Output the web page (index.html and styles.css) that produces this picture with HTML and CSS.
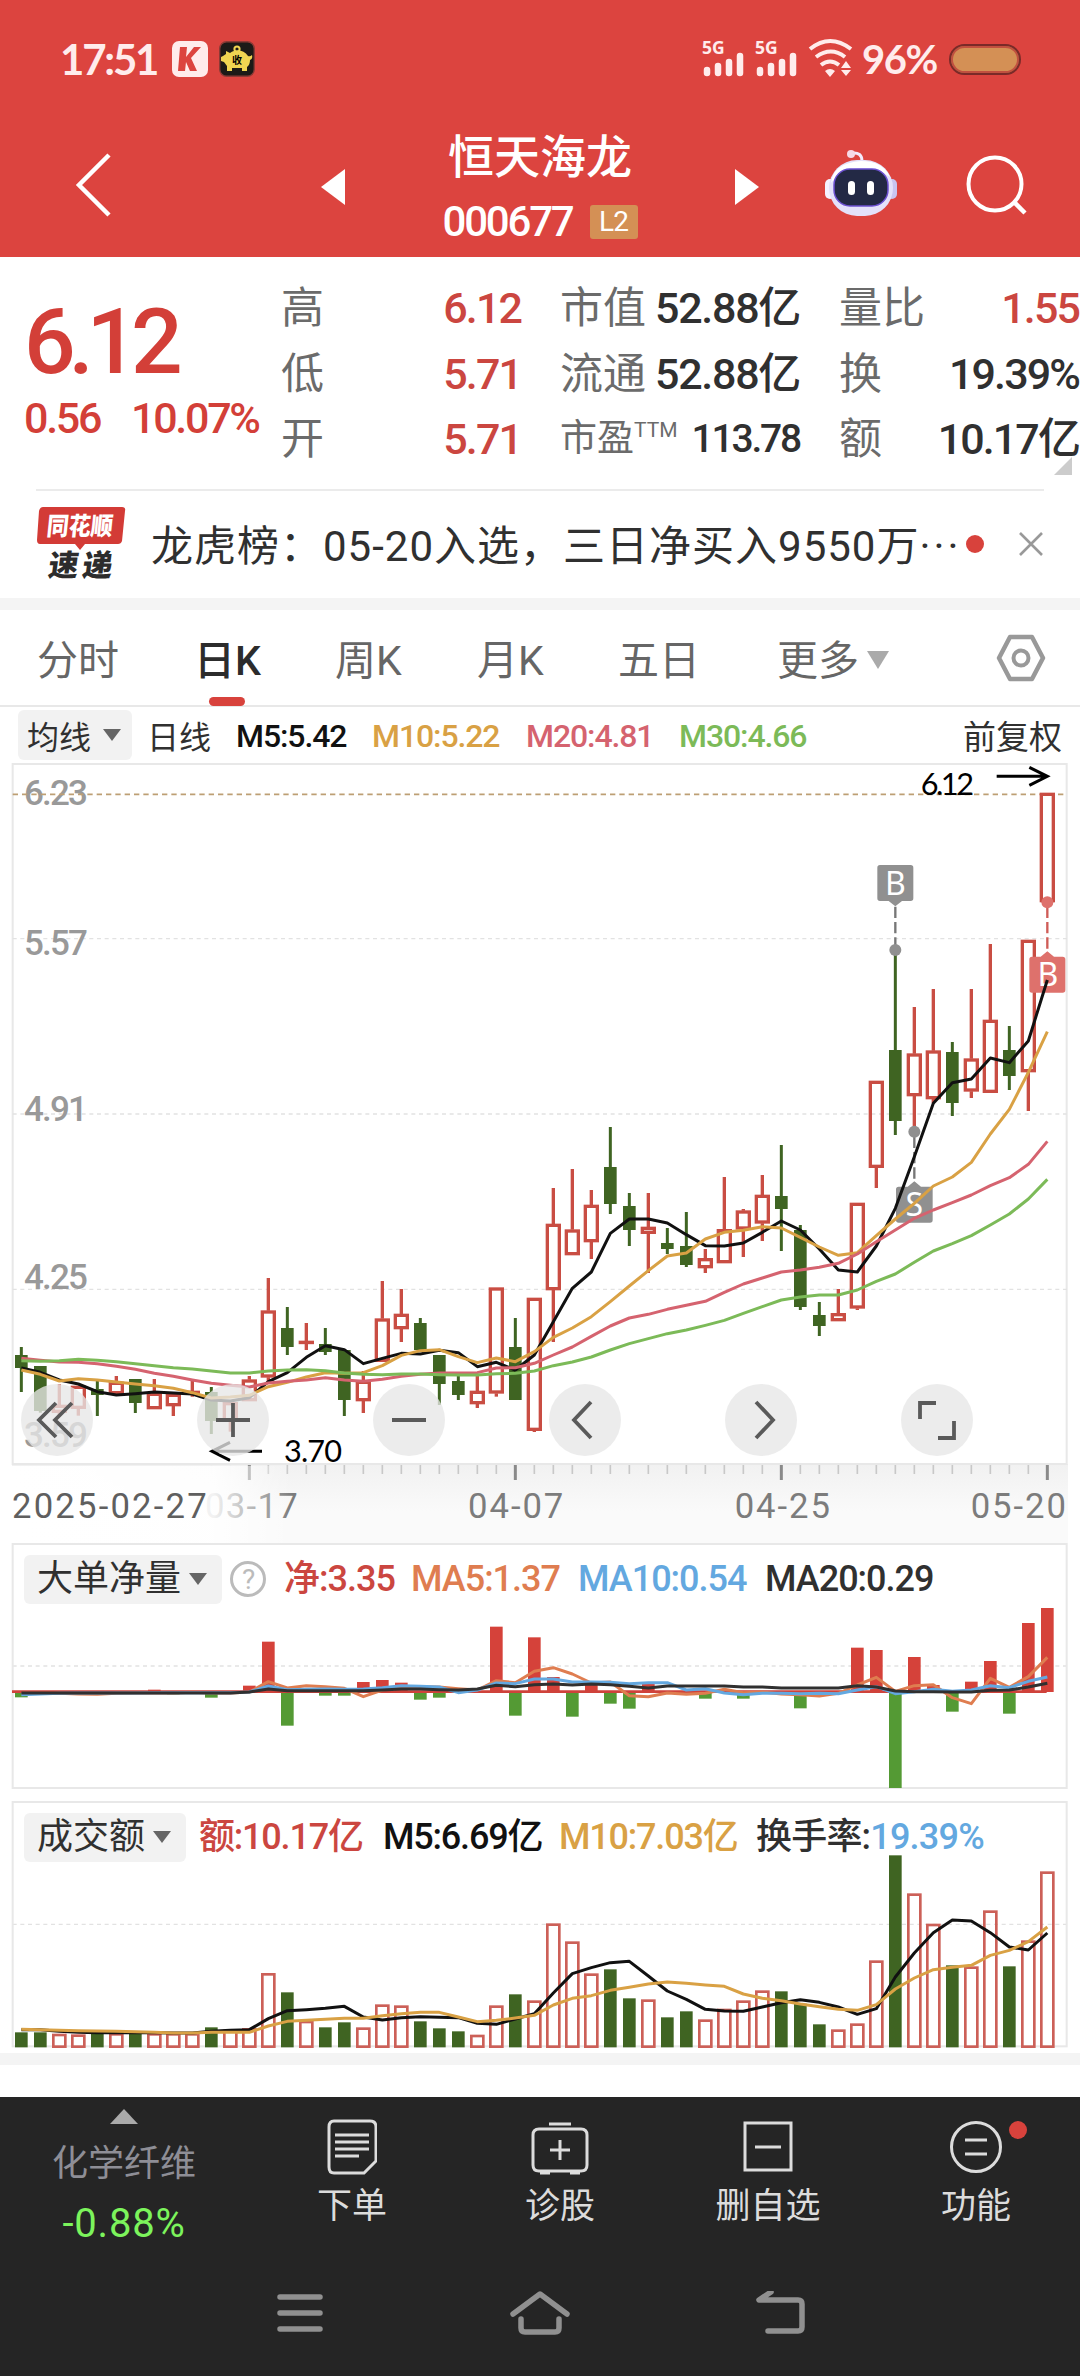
FILE: index.html
```html
<!DOCTYPE html>
<html lang="zh-CN">
<head>
    <meta charset="UTF-8">
    <meta name="viewport" content="width=device-width, initial-scale=1.0">
    <title>恒天海龙 000677</title>
    <link rel="stylesheet" href="styles.css">
</head>
<body>
    <header class="header">
        <div class="status-bar">
            <span class="time">17:51</span>
            <svg class="app-k" width="36" height="36" viewBox="0 0 36 36">
                <rect width="36" height="36" rx="7" fill="#ffecec"/>
                <path d="M8 6h7l-1 10 8-10h7L19 17l6 13h-7l-4-9-1 9H6z" fill="#dc443f"/>
            </svg>
            <svg class="app-pig" width="36" height="36" viewBox="0 0 36 36">
                <rect x=".7" y=".7" width="34.6" height="34.6" rx="7" fill="#1c1a17" stroke="#8a3a35" stroke-width="1.4"/>
                <path d="M8 30v-5l-3-4-3-1v-4l2-1 3-2v-3l4 2c6-4 14-3 18 3q2 1 4-1 1 4-2 5 0 5-3 7v4h-5v-3H13v3z" fill="#f0d552"/>
                <circle cx="18" cy="8" r="2.6" fill="none" stroke="#f0d552" stroke-width="2"/>
                <text x="13" y="23" font-size="10">收</text>
            </svg>
            <div class="status-right">
                <svg width="42" height="40" viewBox="0 0 42 40">
                    <text class="net" x="0" y="15">5G</text>
                    <path d="M5 31v3M16 27v7M27 23v11M38 17v17" class="signal"/>
                </svg>
                <svg width="42" height="40" viewBox="0 0 42 40">
                    <text class="net" x="0" y="15">5G</text>
                    <path d="M5 31v3M16 27v7M27 23v11M38 17v17" class="signal"/>
                </svg>
                <svg width="46" height="40" viewBox="0 0 46 40">
                    <path d="M2 10q20-16 41 0M8 18q15-11 29 0M13 26q9-7 18 0" fill="none" stroke="#ffecec" stroke-width="4"/>
                    <path d="M17 32q5-4 10 0l-5 6zM33 29l5-7 5 7zM33 31l5 6 5-6z" fill="#ffecec"/>
                </svg>
                <span class="percent">96%</span>
                <span class="battery"></span>
            </div>
        </div>
        <div class="nav-bar">
            <svg class="back" width="40" height="66" viewBox="0 0 40 66"><path d="M35 3L5 33l30 30" fill="none" stroke="#fff" stroke-width="4.5"/></svg>
            <svg class="prev" width="24" height="36" viewBox="0 0 24 36"><path d="M24 0v36L0 18z" fill="#fff"/></svg>
            <div class="stock">
                <h1>恒天海龙</h1>
                <div class="code"><span>000677</span><b>L2</b></div>
            </div>
            <svg class="next" width="24" height="36" viewBox="0 0 24 36"><path d="M0 0v36l24-18z" fill="#fff"/></svg>
            <svg class="robot" width="72" height="68" viewBox="0 0 72 68">
                <path d="M27 4q10-1 10 8" fill="none" stroke="#f3eafc" stroke-width="3"/>
                <circle cx="26" cy="5" r="4" fill="#f6d9e6"/>
                <rect x="0" y="30" width="10" height="20" rx="5" fill="#f5f2ff"/>
                <rect x="62" y="30" width="10" height="20" rx="5" fill="#c9c4f0"/>
                <rect x="4" y="11" width="64" height="56" rx="28" fill="#e4e1fa"/>
                <path d="M6 34Q8 14 36 12q22 0 29 16-12-10-30-9T6 34z" fill="#fff"/>
                <rect x="9" y="20" width="54" height="37" rx="16" fill="#232945" stroke="#6b4fd0" stroke-width="1.5"/>
                <rect x="23" y="32" width="7" height="14" rx="3.5" fill="#fff"/>
                <rect x="42" y="32" width="7" height="14" rx="3.5" fill="#fff"/>
            </svg>
            <svg class="search" width="62" height="60" viewBox="0 0 62 60"><circle cx="29" cy="29" r="26.5" fill="none" stroke="#fff" stroke-width="4"/><path d="M48 47l11 11" stroke="#fff" stroke-width="4.5"/></svg>
        </div>
    </header>

    <section class="quote">
        <div class="price">
            <div class="now">6.12</div>
            <div class="change"><span>0.56</span><span>10.07%</span></div>
        </div>
        <dl class="col">
            <div><dt>高</dt><dd class="red">6.12</dd></div>
            <div><dt>低</dt><dd class="red">5.71</dd></div>
            <div><dt>开</dt><dd class="red">5.71</dd></div>
        </dl>
        <dl class="col">
            <div><dt>市值</dt><dd>52.88亿</dd></div>
            <div><dt>流通</dt><dd>52.88亿</dd></div>
            <div class="small"><dt>市盈<sup>TTM</sup></dt><dd>113.78</dd></div>
        </dl>
        <dl class="col">
            <div><dt>量比</dt><dd class="red">1.55</dd></div>
            <div><dt>换</dt><dd>19.39%</dd></div>
            <div><dt>额</dt><dd>10.17亿</dd></div>
        </dl>
        <span class="corner"></span>
    </section>

    <section class="news">
        <svg width="90" height="74" viewBox="0 0 90 74">
            <path d="M6 0h79q4 0 3 4l-3 30q-1 3-4 3H48l-5 6-5-6H3q-3 0-3-4L2 4q1-4 4-4z" fill="#d33b36"/>
            <text class="logo-top" x="12" y="28" textLength="66" lengthAdjust="spacingAndGlyphs" transform="skewX(-6)">同花顺</text>
            <text class="logo-bottom" x="20" y="69" textLength="64" transform="skewX(-8)">速递</text>
        </svg>
        <p>龙虎榜：05-20入选，三日净买入9550万<i>···</i></p>
        <span class="dot"></span>
        <svg class="close" width="26" height="26" viewBox="0 0 26 26"><path d="M2 2l22 22M24 2L2 24" stroke="#999" stroke-width="2.6"/></svg>
    </section>

    <nav class="tabs">
        <a>分时</a>
        <a class="active">日K</a>
        <a>周K</a>
        <a>月K</a>
        <a>五日</a>
        <a>更多<i></i></a>
        <svg width="50" height="48" viewBox="0 0 50 48"><path d="M14 3h22l11 21-11 21H14L3 24z" fill="none" stroke="#999" stroke-width="4.5" stroke-linejoin="round"/><circle cx="25" cy="24" r="7.5" fill="none" stroke="#999" stroke-width="4"/></svg>
    </nav>

    <div class="toolbar">
        <span class="pill">均线<i></i></span>
        <span class="cycle">日线</span>
        <span class="m5">M5:5.42</span>
        <span class="gold">M10:5.22</span>
        <span class="pink">M20:4.81</span>
        <span class="green">M30:4.66</span>
        <span class="adjust">前复权</span>
    </div>

    <section class="kline">
        <!-- charts are drawn in 3x units -->
        <svg width="1080" height="780" viewBox="0 39 3240 2340">
            <defs>
                <linearGradient id="axisY" x1="0" y1="0" x2="0" y2="1"><stop offset="0" stop-color="#f1f1f1"/><stop offset=".6" stop-color="#fafafa"/></linearGradient>
                <linearGradient id="axisX"><stop offset="0" stop-color="#fff"/><stop offset=".72" stop-color="#fff" stop-opacity=".9"/><stop offset="1" stop-color="#fff" stop-opacity="0"/></linearGradient>
            </defs>
            <rect x="36" y="2142" width="3168" height="237" fill="url(#axisY)"/>
            <rect x="38" y="42" width="3162" height="2100" fill="#fff" stroke="#e8e8e8" stroke-width="6"/>
            <path d="M38 566H3200M38 1092H3200M38 1618H3200" class="grid"/>
            <g class="level">
                <text x="72" y="166" textLength="192">6.23</text>
                <text x="72" y="615" textLength="192">5.57</text>
                <text x="72" y="1114" textLength="192">4.91</text>
                <text x="72" y="1617" textLength="192">4.25</text>
                <text x="72" y="2090" textLength="192">3.59</text>
            </g>
            <path d="M38 133H3200" class="last-line"/>
            <g id="ticks"></g>
            <g class="date">
                <text x="615" y="2303" textLength="278">03-17</text>
                <text x="1404" y="2303" textLength="286">04-07</text>
                <text x="2204" y="2303" textLength="286">04-25</text>
                <text x="2912" y="2303" textLength="286">05-20</text>
                <rect x="36" y="2148" width="840" height="231" fill="url(#axisX)"/>
                <text x="36" y="2303" textLength="584" class="first">2025-02-27</text>
            </g>
            <g id="candles"></g>
            <g class="mark">
                <path d="M2686 470V590" class="stem"/><circle cx="2686" cy="600" r="18"/>
                <path d="M2640 345h92q8 0 8 8v92q0 8-8 8h-26l-20 16-20-16h-26q-8 0-8-8v-92q0-8 8-8z"/><text x="2686" y="434">B</text>
                <path d="M2743 1160V1300" class="stem"/><circle cx="2743" cy="1145" r="18"/>
                <path d="M2696 1310h27l20-16 20 16h27q8 0 8 8v92q0 8-8 8h-94q-8 0-8-8v-92q0-8 8-8z"/><text x="2743" y="1399">S</text>
            </g>
            <g class="mark buy">
                <path d="M3142 470V610" class="stem"/><circle cx="3142" cy="457" r="18"/>
                <path d="M3096 620h26l20-16 20 16h26q8 0 8 8v92q0 8-8 8h-92q-8 0-8-8v-92q0-8 8-8z"/><text x="3144" y="709">B</text>
            </g>
            <g id="maLines"></g>
            <g class="peak">
                <text x="2762" y="135" textLength="160">6.12</text>
                <path d="M2990 79H3140M3088 52l54 27-54 27"/>
                <text x="852" y="2135" textLength="174">3.70</text>
                <path d="M786 2104H640M690 2077l-54 27 54 27"/>
            </g>
        </svg>
        <div class="controls">
            <button><svg viewBox="0 0 72 72"><path d="M35 19L18 36l17 17M51 19L34 36l17 17"/></svg></button>
            <button><svg viewBox="0 0 72 72"><path d="M19 36h34M36 19v34"/></svg></button>
            <button><svg viewBox="0 0 72 72"><path d="M19 36h34"/></svg></button>
            <button><svg viewBox="0 0 72 72"><path d="M42 18L25 36l17 18"/></svg></button>
            <button><svg viewBox="0 0 72 72"><path d="M31 18l17 18-17 18"/></svg></button>
            <button><svg viewBox="0 0 72 72"><path d="M19 35V19h16M37 54h16V37"/></svg></button>
        </div>
    </section>

    <section class="panel">
        <svg width="1080" height="248" viewBox="0 39 3240 744">
            <path d="M38 408H3200" class="grid"/>
            <rect x="38" y="42" width="3162" height="732" class="frame"/>
            <g id="netBars"></g>
            <path d="M36 485H3140" stroke="#cf423b" stroke-width="8"/>
            <g id="netLines"></g>
        </svg>
        <div class="panel-head">
            <span class="pill">大单净量<i></i></span>
            <span class="help">?</span>
            <span class="red">净:3.35</span>
            <span class="orange">MA5:1.37</span>
            <span class="blue">MA10:0.54</span>
            <span class="dark">MA20:0.29</span>
        </div>
    </section>

    <section class="panel amount">
        <svg width="1080" height="248" viewBox="0 812 3240 744">
            <path d="M38 1182H3200" class="grid"/>
            <rect x="38" y="815" width="3162" height="733" class="frame"/>
            <g id="volBars"></g>
            <g id="volLines"></g>
        </svg>
        <div class="panel-head">
            <span class="pill">成交额<i></i></span>
            <span class="red">额:10.17亿</span>
            <span class="m5">M5:6.69亿</span>
            <span class="gold">M10:7.03亿</span>
            <span class="dark">换手率:<em>19.39%</em></span>
        </div>
    </section>

    <div class="gap"></div>

    <footer class="footer">
        <div class="actions">
            <div class="sector">
                <i></i>
                <span>化学纤维</span>
                <b>-0.88%</b>
            </div>
            <div class="action">
                <svg width="50" height="56" viewBox="0 0 50 56"><path d="M7 2h36q6 0 6 6v34L37 54H7q-5 0-5-6V8q0-6 5-6zM8 16h34M8 23h34M8 30h34M8 37h24"/></svg>
                <span>下单</span>
            </div>
            <div class="action">
                <svg width="58" height="56" viewBox="0 0 58 56"><path d="M18 5h22M8 10h42q6 0 6 6v30q0 6-6 6H8q-6 0-6-6V16q0-6 6-6zM29 21v20M19 31h20M9 54h10M39 54h10"/></svg>
                <span>诊股</span>
            </div>
            <div class="action">
                <svg width="50" height="56" viewBox="0 0 50 56"><path d="M2 4h46v47H2zM12 28h26"/></svg>
                <span>删自选</span>
            </div>
            <div class="action">
                <svg width="52" height="56" viewBox="0 0 52 56"><circle cx="26" cy="28" r="24.5"/><path d="M15 21h22M15 35h22"/></svg>
                <span>功能</span>
                <i class="badge"></i>
            </div>
        </div>
        <div class="system">
            <svg width="48" height="46" viewBox="0 0 48 46"><path d="M4 6h40M4 22h40M4 38h40"/></svg>
            <svg width="60" height="46" viewBox="0 0 60 46"><path d="M3 23L30 3l27 20M11 28v9q0 4 4 4h30q4 0 4-4v-9"/></svg>
            <svg width="50" height="46" viewBox="0 0 50 46"><path d="M15 1L3 9h39q4 0 4 4v23q0 4-4 4H12"/></svg>
        </div>
    </footer>

    <script src="chart.js"></script>
</body>
</html>
```
FILE: styles.css
```css
* {
    box-sizing: border-box;
}
body {
    margin: 0;
    width: 1080px;
    height: 2376px;
    overflow: hidden;
    background: #fff;
    color: #303030;
    font-family: Roboto, "Noto Sans CJK SC", sans-serif;
}
svg { display: block; flex: none; }
h1, p, dl, dd { margin: 0; }
i, em { font-style: normal; }

/* header */
.header {
    height: 257px;
    background: #dc443f;
    color: #fff;
}
.status-bar {
    display: flex;
    align-items: center;
    height: 118px;
    padding: 0 60px;
    color: #ffecec;
    font-family: Lato, sans-serif;
    font-weight: 700;
}
.time {
    width: 112px;
    font-size: 42px;
    letter-spacing: -2.2px;
}
.app-pig { margin-left: 11px; }
.app-pig text { font-family: "Noto Sans CJK SC", sans-serif; font-weight: 700; }
.status-right {
    display: flex;
    align-items: center;
    margin-left: auto;
    gap: 11px;
}
.status-right > svg { overflow: visible; }
.net {
    font-family: "Noto Sans", sans-serif;
    font-size: 17.5px;
    font-weight: 700;
    fill: #ffecec;
}
.signal {
    stroke: #ffecec;
    stroke-width: 6.5;
    stroke-linecap: round;
}
.percent {
    width: 76px;
    margin-left: -3px;
    font-size: 40px;
    letter-spacing: -1.4px;
}
.battery {
    width: 72px;
    height: 31px;
    margin: 0 -1px 0 0;
    border: 2px solid #7a2a28;
    border-radius: 16px;
    background: #d49055;
    box-shadow: inset 0 0 0 2px #c2503f;
}
.nav-bar {
    display: flex;
    align-items: center;
    height: 134px;
    padding-left: 74px;
}
.prev { margin-left: 207px; margin-top: 4px; }
.stock {
    display: flex;
    flex-direction: column;
    align-items: center;
    width: 390px;
}
.stock h1 {
    height: 66px;
    font-size: 46px;
    font-weight: 500;
    line-height: 61px;
}
.code {
    display: flex;
    align-items: center;
    gap: 17px;
    height: 50px;
    padding-top: 7px;
    font-size: 42px;
    font-weight: 500;
    letter-spacing: -2.2px;
}
.code b {
    width: 48px;
    height: 34px;
    border-radius: 3px;
    background: #d49055;
    font-size: 28px;
    font-weight: 400;
    line-height: 34px;
    text-align: center;
    letter-spacing: -1px;
}
.next { margin-top: 4px; }
.robot { margin: -4px 0 0 66px; }
.search { margin-left: 69px; }

/* quote */
.quote {
    display: grid;
    grid-template-columns: 214px 240px 240px 240px;
    column-gap: 39px;
    position: relative;
    height: 233px;
    padding: 18px 0 0 28px;
}
.quote::after {
    content: "";
    position: absolute;
    left: 36px;
    right: 36px;
    bottom: -1px;
    height: 2px;
    background: #ebebeb;
}
.price { color: #d33f38; font-weight: 500; }
.now {
    margin: 18px 0 0 -4px;
    font-size: 91px;
    line-height: 98px;
    letter-spacing: -7.2px;
}
.change {
    display: flex;
    gap: 31px;
    margin: 3px 0 0 -4px;
    font-size: 43px;
    line-height: 48px;
    letter-spacing: -2.3px;
    white-space: nowrap;
}
.col > div {
    display: flex;
    justify-content: space-between;
    height: 65.5px;
    line-height: 66px;
}
.col dt {
    font-size: 43px;
    color: #6b6b6b;
    white-space: nowrap;
}
.col dd {
    font-size: 43px;
    font-weight: 500;
    letter-spacing: -1.9px;
    white-space: nowrap;
}
.col:nth-child(3) dd { letter-spacing: -1.3px; }
.col .small dt { font-size: 37px; }
.col:nth-child(3) .small dd { font-size: 39px; letter-spacing: -2.2px; }
.col sup {
    font-size: 21px;
    line-height: 0;
    vertical-align: 14px;
    letter-spacing: 0;
}
.red, .col dd.red { color: #cb4640; }
.corner {
    position: absolute;
    right: 8px;
    bottom: 15px;
    border-left: 18px solid transparent;
    border-bottom: 18px solid #ccc;
}

/* news */
.news {
    display: flex;
    align-items: center;
    height: 120px;
    padding: 0 36px 0 37px;
    border-bottom: 12px solid #f4f4f4;
}
.logo-top { fill: #fff; font-size: 25px; font-weight: 900; }
.logo-bottom { fill: #2c2c2c; font-size: 30px; font-weight: 900; }
.news p {
    width: 812px;
    margin: -4px 0 0 24px;
    font-size: 42px;
    letter-spacing: 1px;
    white-space: nowrap;
}
.news p i { letter-spacing: 3px; }
.dot {
    width: 18px;
    height: 18px;
    margin-left: 3px;
    border-radius: 50%;
    background: #d8423c;
}
.close { margin-left: auto; }

/* period tabs */
.tabs {
    position: relative;
    display: flex;
    align-items: center;
    height: 97px;
    padding-left: 37px;
    border-bottom: 2px solid #e8e8e8;
    font-size: 41px;
    color: #666;
}
.tabs a { position: relative; top: -1px; width: 141px; }
.tabs a:nth-child(1) { width: 157px; }
.tabs a:nth-child(3) { width: 142px; }
.tabs a:nth-child(5) { width: 159px; }
.tabs a:nth-child(6) { width: 219px; }
.tabs .active { color: #2c2c2c; font-weight: 500; }
.tabs .active::after {
    content: "";
    position: absolute;
    left: 15px;
    bottom: -19px;
    width: 36px;
    height: 9px;
    border-radius: 5px;
    background: #d8423c;
}
.tabs i {
    display: inline-block;
    margin-left: 8px;
    vertical-align: 6px;
    border: 11px solid transparent;
    border-top: 18px solid #aaa;
    border-bottom: 0;
}

/* indicator toolbar */
.toolbar {
    display: flex;
    align-items: center;
    height: 56px;
    padding: 3px 18px 3px;
    font-size: 32px;
    letter-spacing: 0;
}
.toolbar span { flex: none; white-space: nowrap; }
.pill {
    display: flex;
    flex: none;
    align-items: center;
    justify-content: space-between;
    border-radius: 6px;
    background: #f2f2f2;
}
.pill i {
    border: 9px solid transparent;
    border-top: 12px solid #666;
    border-bottom: 0;
}
.toolbar .pill {
    width: 114px;
    height: 50px;
    padding: 0 11px 0 9px;
}
.cycle { width: 89px; margin-left: 15px; }
.toolbar .m5 { width: 136px; }
.toolbar .gold { width: 154px; }
.toolbar .pink { width: 153px; }
.toolbar .m5, .toolbar .gold, .toolbar .pink, .toolbar .green { padding-top: 2px; font-weight: 500; letter-spacing: -1.1px; }
.toolbar .adjust { margin-left: auto; font-size: 33px; }
.m5 { color: #111; }
.gold { color: #d9a144; }
.pink { color: #d5636f; }
.green { color: #7cba58; }
.orange { color: #df7d50; }
.blue, em { color: #63a8e0; }

/* k-line */
.kline { position: relative; height: 780px; }
.grid { fill: none; stroke: #e2e2e2; stroke-width: 4; stroke-dasharray: 12 11; }
.last-line { stroke: #bd9f74; stroke-width: 5; stroke-dasharray: 16 12; }
.level text { font-size: 105px; font-weight: 500; fill: #999; }
.date text { font-size: 104px; font-weight: 400; fill: #7c7c7c; }
.date .first { fill: #5f5f5f; }
.up { fill: none; stroke: #c94d43; stroke-width: 10; }
.down { fill: #3f6422; stroke: none; }
.wick-down { stroke: #3f6422; stroke-width: 9; }
.line { fill: none; stroke-width: 9; stroke-linejoin: round; }
.mark { fill: #909090; }
.mark text { fill: #fff; font-family: "Noto Sans", sans-serif; font-size: 96px; text-anchor: middle; }
.mark .stem { stroke: #777; stroke-width: 7; stroke-dasharray: 34 12; }
.buy { fill: #de716c; }
.buy .stem { stroke: #cf5c57; }
.peak text { font-family: Lato, sans-serif; font-size: 92px; fill: #000; }
.peak path { fill: none; stroke: #000; stroke-width: 9; }
.controls {
    position: absolute;
    left: 21px;
    top: 621px;
    display: flex;
    gap: 104px;
}
.controls button {
    width: 72px;
    height: 72px;
    padding: 0;
    border: 0;
    border-radius: 50%;
    background: rgba(231, 231, 231, 0.78);
}
.controls path { fill: none; stroke: #5a5a5a; stroke-width: 3.8; }

/* sub charts */
.panel { position: relative; height: 258px; }
.panel > svg { position: absolute; left: 0; top: 0; }
.frame { fill: none; stroke: #e8e8e8; stroke-width: 6; }
.panel-head {
    position: relative;
    display: flex;
    align-items: center;
    height: 60px;
    padding: 12px 24px 0;
    font-size: 36px;
    font-weight: 500;
    line-height: 48px;
    letter-spacing: -1px;
    white-space: nowrap;
}
.panel-head .pill {
    width: 198px;
    height: 49px;
    padding: 0 15px 0 13px;
    font-weight: 400;
    letter-spacing: 0;
}
.panel-head .help {
    width: 36px;
    height: 36px;
    margin: 0 18px 0 8px;
    border: 3px solid #bbb;
    border-radius: 50%;
    color: #bbb;
    font-size: 28px;
    font-weight: 400;
    line-height: 31px;
    text-align: center;
}
.panel-head .red { width: 127px; }
.panel-head .orange { width: 167px; }
.panel-head .blue { width: 187px; }
.dark { color: #303030; }
.amount { height: 252px; }
.amount .panel-head { letter-spacing: -1.2px; }
.amount .pill { width: 162px; }
.amount .red { width: 184px; margin-left: 13px; }
.amount .m5 { width: 176px; }
.amount .gold { width: 197px; }
.amount .dark { letter-spacing: -0.8px; }
.vol-up { fill: none; stroke: #cc6058; stroke-width: 8; }

.gap {
    height: 44px;
    border-top: 12px solid #f4f4f4;
}

/* footer */
.footer {
    height: 279px;
    background: #252525;
    color: #dcdcdc;
}
.actions {
    display: grid;
    grid-template-columns: 248px repeat(4, 208px);
    height: 170px;
    font-size: 35px;
}
.sector {
    display: flex;
    flex-direction: column;
    align-items: center;
    padding-top: 12px;
    line-height: 60px;
    color: #8e8e96;
}
.sector i {
    margin-bottom: 10px;
    border: 14px solid transparent;
    border-bottom: 15px solid #aaa;
    border-top: 0;
}
.sector span { font-size: 36px; }
.sector b { color: #7cf45c; font-size: 40px; font-weight: 400; letter-spacing: 0.8px; }
.action {
    position: relative;
    display: flex;
    flex-direction: column;
    align-items: center;
    padding-top: 22px;
    line-height: 63px;
}
.action path, .action circle { fill: none; stroke: #dcdcdc; stroke-width: 3; }
.badge {
    position: absolute;
    left: 137px;
    top: 24px;
    width: 18px;
    height: 18px;
    border-radius: 50%;
    background: #d8423c;
}
.system {
    display: flex;
    padding: 24px 0 0 276px;
    gap: 186px;
}
.system path { fill: none; stroke: #909090; stroke-width: 5.5; stroke-linecap: round; stroke-linejoin: round; }
```
FILE: chart.js
```javascript
const NS = 'http://www.w3.org/2000/svg';
const STEP = 57;
const FIRST = 64;

function add(parent, tag, attrs) {
    const el = document.createElementNS(NS, tag);
    for (const key in attrs) el.setAttribute(key, attrs[key]);
    document.getElementById(parent).appendChild(el);
}

function xAt(i) {
    return FIRST + i * STEP;
}

function drawLine(parent, values, color) {
    const points = values.map((v, i) => `${xAt(i)},${v}`).join(' ');
    add(parent, 'polyline', { points, class: 'line', stroke: color });
}

// [direction, high, body top, body bottom, low]
const candles = [
    ['G', 1791, 1815, 1854, 1926], ['G', 1848, 1848, 1983, 1988], ['R', 1902, 1965, 1988, 1995],
    ['R', 1908, 1908, 1976, 1997], ['G', 1893, 1917, 1935, 1998], ['R', 1878, 1896, 1932, 1935],
    ['G', 1887, 1887, 1959, 1989], ['R', 1887, 1929, 1977, 1977], ['R', 1932, 1932, 1968, 1998],
    ['R', 1890, 1923, 1932, 1940], ['G', 1911, 1926, 2013, 2052], ['R', 1957, 1957, 2015, 2045],
    ['R', 1878, 1889, 1953, 1953], ['R', 1584, 1682, 1882, 1900], ['G', 1671, 1734, 1791, 1815],
    ['R', 1719, 1773, 1780, 1800], ['G', 1734, 1782, 1806, 1815], ['G', 1800, 1800, 1950, 1998],
    ['R', 1863, 1893, 1953, 1989], ['R', 1593, 1706, 1835, 1835], ['R', 1617, 1692, 1737, 1776],
    ['G', 1704, 1719, 1800, 1800], ['G', 1815, 1815, 1902, 1965], ['G', 1878, 1893, 1935, 1950],
    ['R', 1875, 1923, 1962, 1974], ['R', 1613, 1613, 1930, 1940], ['G', 1704, 1791, 1950, 1950],
    ['R', 1644, 1644, 2042, 2046], ['R', 1314, 1422, 1620, 1776], ['R', 1257, 1439, 1515, 1515],
    ['R', 1320, 1365, 1476, 1527], ['G', 1131, 1251, 1362, 1392], ['G', 1329, 1368, 1440, 1488],
    ['R', 1329, 1431, 1451, 1569], ['G', 1434, 1479, 1497, 1512], ['G', 1386, 1488, 1545, 1551],
    ['R', 1497, 1525, 1554, 1569], ['R', 1281, 1438, 1539, 1539], ['R', 1377, 1382, 1438, 1521],
    ['R', 1275, 1335, 1420, 1473], ['G', 1185, 1338, 1377, 1503], ['G', 1425, 1440, 1671, 1680],
    ['G', 1656, 1695, 1728, 1758], ['R', 1617, 1690, 1713, 1713], ['R', 1359, 1359, 1675, 1680],
    ['R', 993, 993, 1253, 1314], ['G', 597, 900, 1113, 1155], ['R', 771, 911, 1038, 1145],
    ['R', 717, 902, 1047, 1060], ['G', 876, 906, 1059, 1098], ['R', 717, 926, 1024, 1044],
    ['R', 582, 810, 1028, 1028], ['G', 828, 900, 978, 1020], ['R', 570, 570, 966, 1083],
    ['R', 129, 129, 456, 456]
];

candles.forEach(([dir, high, top, bottom, low], i) => {
    const x = xAt(i);
    if (dir === 'G') {
        add('candles', 'path', { d: `M${x} ${high}V${low}`, class: 'wick-down' });
        add('candles', 'rect', { x: x - 19, y: top, width: 38, height: bottom - top, class: 'down' });
    } else {
        add('candles', 'path', { d: `M${x} ${high}V${top}M${x} ${bottom}V${low}`, class: 'up' });
        add('candles', 'rect', { x: x - 18, y: top + 4, width: 36, height: Math.max(bottom - top - 8, 0.5), class: 'up' });
    }
});

for (let i = 10; i < 55; i++) {
    const major = i % 14 === 12;
    add('ticks', 'path', {
        d: `M${xAt(i)} 2145V${major ? 2190 : 2172}`,
        stroke: major ? '#8a8a8a' : i < 12 ? '#eee' : '#c8c8c8',
        'stroke-width': major ? 9 : 5
    });
}

drawLine('maLines', [1854, 1867, 1890, 1902, 1925, 1935, 1931, 1926, 1929, 1932, 1950, 1953, 1943, 1895, 1868, 1822, 1787, 1799, 1841, 1825, 1810, 1812, 1801, 1808, 1850, 1837, 1860, 1815, 1715, 1615, 1566, 1450, 1407, 1407, 1419, 1454, 1487, 1488, 1479, 1447, 1413, 1440, 1497, 1560, 1566, 1488, 1375, 1220, 1060, 998, 987, 924, 938, 873, 690], '#111');
drawLine('maLines', [1860, 1873, 1893, 1886, 1890, 1896, 1902, 1907, 1915, 1928, 1944, 1941, 1936, 1910, 1897, 1881, 1868, 1870, 1868, 1847, 1816, 1802, 1799, 1820, 1838, 1824, 1835, 1805, 1762, 1734, 1700, 1655, 1608, 1562, 1518, 1509, 1467, 1447, 1441, 1430, 1434, 1462, 1491, 1516, 1508, 1457, 1407, 1360, 1308, 1281, 1237, 1152, 1078, 967, 845], '#d9a144');
drawLine('maLines', [1825, 1831, 1836, 1837, 1841, 1849, 1858, 1870, 1879, 1890, 1900, 1906, 1911, 1899, 1894, 1890, 1883, 1890, 1894, 1888, 1879, 1873, 1869, 1869, 1868, 1854, 1853, 1840, 1815, 1791, 1759, 1728, 1704, 1693, 1678, 1666, 1654, 1627, 1602, 1584, 1566, 1560, 1552, 1540, 1512, 1475, 1440, 1405, 1380, 1358, 1335, 1307, 1283, 1243, 1174], '#d5636f');
drawLine('maLines', [1832, 1834, 1832, 1828, 1831, 1835, 1841, 1847, 1853, 1857, 1863, 1869, 1869, 1863, 1860, 1859, 1862, 1869, 1873, 1874, 1872, 1872, 1874, 1875, 1875, 1871, 1870, 1863, 1847, 1836, 1821, 1800, 1781, 1766, 1751, 1740, 1726, 1711, 1690, 1670, 1650, 1641, 1635, 1635, 1620, 1594, 1572, 1537, 1503, 1481, 1457, 1425, 1392, 1347, 1288], '#7cba58');

// large order net inflow, bars grow from the zero line
const ZERO = 486;
const net = {
    0: 502, 7: 479, 8: 493, 10: 503, 12: 467, 13: 335, 14: 587, 16: 497, 17: 497, 18: 456, 19: 450, 20: 458,
    21: 509, 22: 503, 25: 290, 26: 557, 27: 322, 28: 441, 29: 560, 30: 462, 31: 521, 32: 536, 33: 462,
    36: 506, 38: 506, 41: 535, 44: 353, 45: 360, 46: 774, 47: 381, 48: 465, 49: 545, 50: 455, 51: 393,
    52: 551, 53: 279, 54: 234
};
for (const i in net) {
    const v = net[i];
    add('netBars', 'rect', {
        x: xAt(Number(i)) - 19,
        y: Math.min(v, ZERO),
        width: 38,
        height: Math.abs(v - ZERO),
        fill: v < ZERO ? '#d5423a' : '#549a34'
    });
}
drawLine('netLines', [490, 490, 490, 492, 493, 490, 489, 488, 489, 487, 489, 489, 486, 455, 474, 467, 470, 475, 500, 480, 472, 470, 471, 476, 480, 452, 458, 424, 413, 432, 459, 456, 497, 500, 489, 493, 490, 478, 488, 486, 492, 494, 498, 490, 465, 442, 484, 467, 464, 503, 521, 445, 472, 440, 382], '#df7d50');
drawLine('netLines', [494, 492, 490, 489, 489, 489, 489, 488, 488, 488, 488, 488, 486, 468, 479, 478, 477, 478, 477, 473, 467, 469, 471, 488, 480, 459, 461, 447, 447, 456, 456, 457, 461, 458, 458, 480, 476, 489, 494, 490, 490, 491, 490, 491, 480, 470, 491, 485, 478, 484, 480, 467, 473, 454, 441], '#63a8e0');
drawLine('netLines', [489, 489, 489, 489, 489, 489, 489, 489, 489, 489, 489, 489, 486, 477, 482, 482, 482, 482, 482, 480, 477, 477, 479, 480, 477, 466, 470, 464, 462, 465, 462, 464, 469, 474, 468, 468, 468, 468, 471, 471, 474, 474, 474, 474, 467, 471, 483, 485, 485, 486, 486, 481, 480, 471, 460], '#303030');

// turnover
const BASE = 1551;
const volume = [
    1506, 1506, 1512, 1514, 1508, 1510, 1508, 1510, 1510, 1510, 1491, 1500, 1495, 1330, 1386, 1473, 1491, 1476,
    1493, 1424, 1427, 1473, 1494, 1503, 1515, 1427, 1392, 1412, 1181, 1235, 1331, 1317, 1404, 1409, 1461, 1443,
    1469, 1437, 1412, 1382, 1383, 1420, 1482, 1499, 1481, 1292, 975, 1091, 1182, 1305, 1310, 1142, 1308, 1232, 1025
];
volume.forEach((top, i) => {
    const x = xAt(i);
    if (candles[i][0] === 'G') {
        add('volBars', 'rect', { x: x - 19, y: top, width: 38, height: BASE - top, class: 'down' });
    } else {
        add('volBars', 'rect', { x: x - 18, y: top + 2, width: 36, height: BASE - top - 4, class: 'vol-up' });
    }
});
drawLine('volLines', [1498, 1498, 1503, 1506, 1507, 1507, 1507, 1507, 1508, 1508, 1503, 1500, 1498, 1465, 1441, 1438, 1434, 1428, 1460, 1469, 1462, 1459, 1461, 1462, 1479, 1482, 1466, 1450, 1388, 1330, 1312, 1297, 1293, 1337, 1382, 1407, 1437, 1442, 1443, 1430, 1417, 1408, 1416, 1430, 1452, 1435, 1340, 1268, 1207, 1169, 1172, 1207, 1250, 1259, 1208], '#111');
drawLine('volLines', [1497, 1498, 1500, 1501, 1502, 1503, 1504, 1506, 1508, 1508, 1506, 1506, 1506, 1487, 1473, 1470, 1467, 1464, 1464, 1456, 1450, 1446, 1446, 1460, 1474, 1470, 1463, 1455, 1424, 1404, 1396, 1380, 1371, 1361, 1355, 1359, 1364, 1368, 1391, 1404, 1411, 1421, 1429, 1437, 1440, 1423, 1376, 1343, 1318, 1311, 1305, 1275, 1260, 1234, 1190], '#d9a144');
```
